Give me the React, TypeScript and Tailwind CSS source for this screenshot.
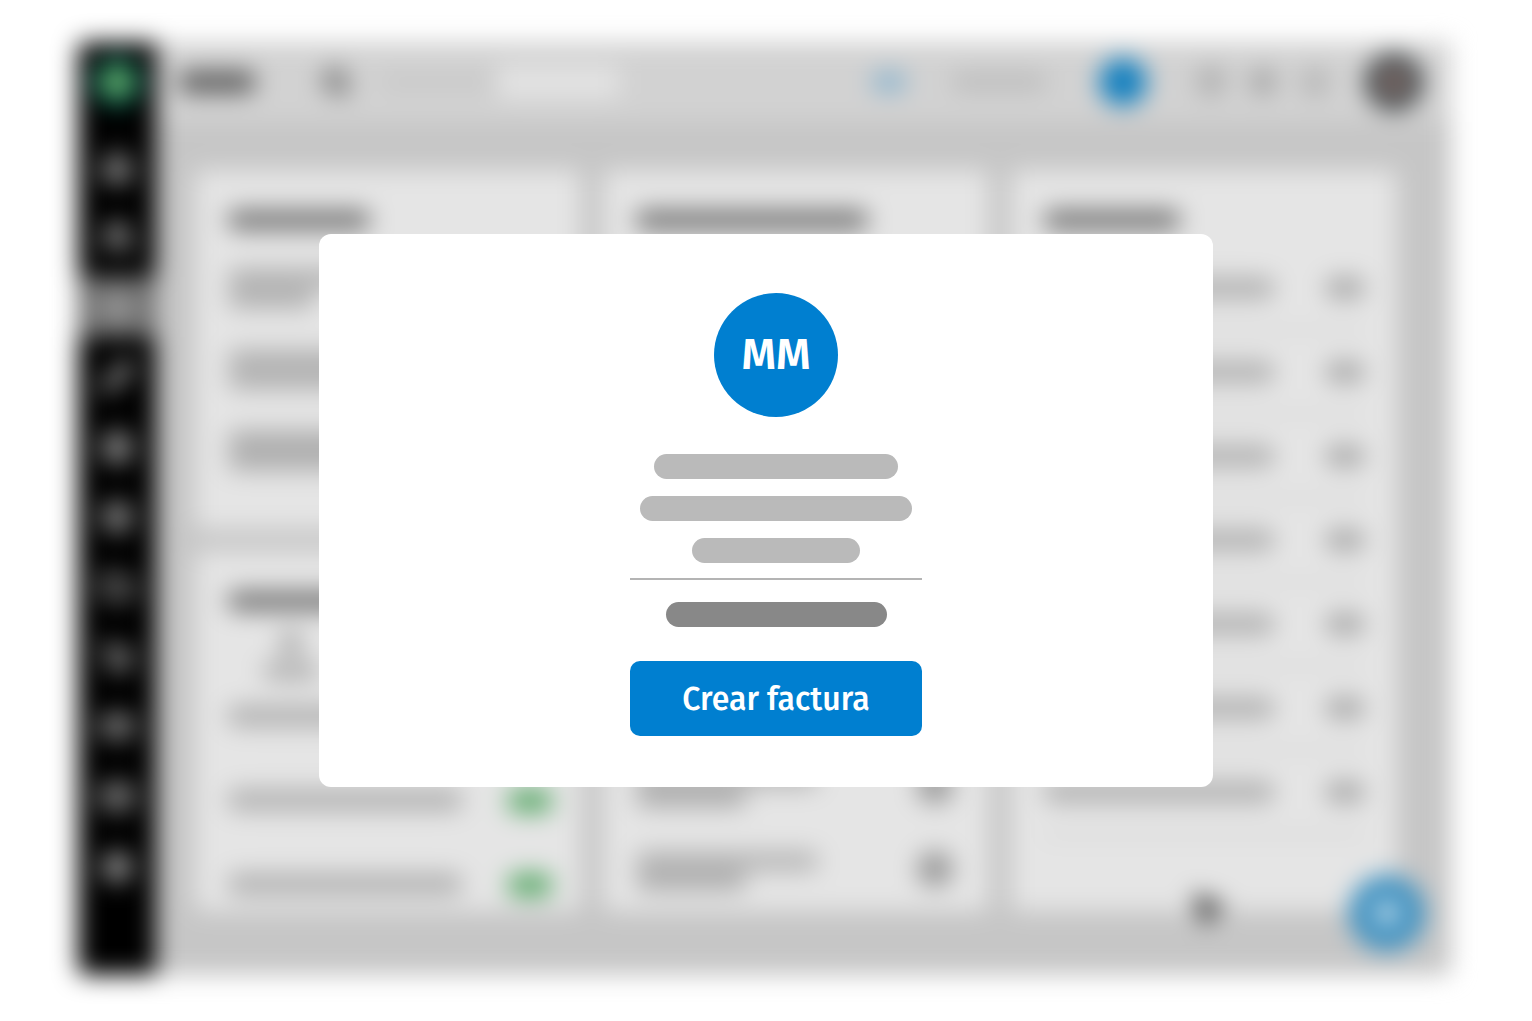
import {
  Bell,
  Box,
  CircleUser,
  CreditCard,
  FileText,
  Folder,
  HelpCircle,
  House,
  LucideIcon,
  Mail,
  MousePointer2,
  Pencil,
  Plus,
  Search,
  Settings,
  ShoppingCart,
  Users,
} from "lucide-react";

interface BarProps {
  className: string;
}

const navItems: { name: string; icon: LucideIcon }[] = [
  { name: "Inicio", icon: House },
  { name: "Contactos", icon: Users },
  { name: "Facturas", icon: FileText },
  { name: "Editar", icon: Pencil },
  { name: "Cuenta", icon: CircleUser },
  { name: "Productos", icon: Box },
  { name: "Archivos", icon: Folder },
  { name: "Compras", icon: ShoppingCart },
  { name: "Pagos", icon: CreditCard },
  { name: "Correo", icon: Mail },
  { name: "Ajustes", icon: Settings },
];

const rows = [1, 2, 3, 4, 5, 6, 7];

function Bar({ className }: BarProps) {
  return <div className={`rounded-full ${className}`} />;
}

function CardTitle({ className }: BarProps) {
  return <Bar className={`h-5 bg-[#757575] ${className}`} />;
}

function Sidebar() {
  return (
    <nav className="w-[78px] shrink-0 rounded-l-lg bg-black">
      <div className="flex h-[90px] justify-center pt-4">
        <div className="flex size-12 items-center justify-center rounded-full bg-[#12705f]">
          <div className="size-6 rounded-full bg-[#84b860]" />
        </div>
      </div>
      {navItems.map(({ name, icon: Icon }) => (
        <div key={name} className="flex h-[70px] items-center">
          <button
            type="button"
            aria-label={name}
            className={
              name === "Facturas"
                ? "flex h-[60px] w-full items-center justify-center bg-[#727272] text-[#a8a8a8]"
                : "flex h-[60px] w-full items-center justify-center text-[#e4e4e4]"
            }
          >
            <Icon size={32} strokeWidth={3} />
          </button>
        </div>
      ))}
    </nav>
  );
}

function Header() {
  return (
    <header className="flex h-[80px] items-center bg-[#d2d2d2] pl-[22px] pr-7">
      <Bar className="h-[22px] w-[78px] bg-[#5d5d5d]" />
      <Search size={28} strokeWidth={5} className="ml-[66px] text-[#555555]" />
      <Bar className="ml-[30px] h-4 w-[116px] bg-[#c8c8c8]" />
      <input
        type="search"
        aria-label="Buscar"
        className="h-8 w-[124px] rounded-lg bg-[#e3e3e3]"
      />
      <Bar className="mr-1 ml-auto h-5 w-9 bg-[#8cb4cd]" />
      <Bar className="ml-10 h-4 w-24 bg-[#bababa]" />
      <div className="ml-[52px] size-12 rounded-full bg-[#1480bf]" />
      <div className="ml-[50px] flex gap-6 text-[#8c8c8c]">
        <HelpCircle size={28} strokeWidth={3} />
        <Settings size={28} strokeWidth={3} />
        <Bell size={28} strokeWidth={3} />
      </div>
      <div className="ml-9 flex size-[58px] items-center justify-center rounded-full bg-[#44484a]">
        <div className="size-5 rounded-full bg-[#b89088]" />
      </div>
    </header>
  );
}

function Dashboard() {
  return (
    <div className="grid flex-1 grid-cols-3 gap-[22px] pt-12 pr-[54px] pb-16 pl-[39px]">
      <div className="flex flex-col gap-[22px]">
        {/* Pending documents */}
        <section className="h-[359px] rounded-lg bg-[#e5e5e5] px-8 pt-10">
          <CardTitle className="w-[144px]" />
          <div className="mt-[38px] flex flex-col gap-10">
            <div>
              <Bar className="h-[21px] w-[180px] bg-[#b4b4b4]" />
              <Bar className="h-[20px] w-[88px] bg-[#b4b4b4]" />
            </div>
            <div>
              <Bar className="h-[21px] w-[240px] bg-[#b4b4b4]" />
              <Bar className="h-[20px] w-[180px] bg-[#b4b4b4]" />
            </div>
            <div>
              <Bar className="h-[21px] w-[240px] bg-[#b0b0b0]" />
              <Bar className="h-[20px] w-[180px] bg-[#b0b0b0]" />
            </div>
          </div>
        </section>
        {/* Tasks with status */}
        <section className="flex-1 rounded-lg bg-[#e5e5e5] px-8 pt-10">
          <CardTitle className="w-[160px]" />
          <div className="mt-5 ml-9 flex w-14 flex-col items-center gap-2">
            <Bar className="size-6 bg-[#a8a8a8]" />
            <Bar className="h-4 w-14 bg-[#a8a8a8]" />
          </div>
          <div className="mt-[26px] flex flex-col">
            {rows.slice(0, 3).map((row) => (
              <div
                key={row}
                className="flex h-[84px] items-start justify-between last:h-6"
              >
                <Bar className="h-[22px] w-[236px] bg-[#b2b2b2]" />
                <Bar className="mr-[-4px] h-6 w-[46px] bg-[#5fab6d]" />
              </div>
            ))}
          </div>
        </section>
      </div>
      {/* Recent activity */}
      <section className="flex flex-col rounded-lg bg-[#e5e5e5] px-8 pt-10">
        <CardTitle className="w-[234px]" />
        <div className="mt-auto pb-5">
          {rows.map((row) => (
            <div key={row} className="flex h-[83px] items-end justify-between">
              <div>
                <Bar className="h-5 w-[184px] bg-[#b5b5b5]" />
                <Bar className="h-5 w-[112px] bg-[#b0b0b0]" />
              </div>
              <Bar className="mr-1 mb-1 size-9 bg-[#9a9a9a]" />
            </div>
          ))}
        </div>
      </section>
      {/* Totals */}
      <section className="rounded-lg bg-[#e5e5e5] px-8 pt-10">
        <CardTitle className="w-[138px]" />
        <div className="mt-[17px]">
          {rows.map((row) => (
            <div
              key={row}
              className="flex h-[84px] items-center justify-between border-b-2 border-[#b8b8b8]"
            >
              <Bar className="h-[22px] w-[232px] bg-[#b2b2b2]" />
              <Bar className="h-[22px] w-10 bg-[#aaaaaa]" />
            </div>
          ))}
        </div>
      </section>
    </div>
  );
}

function InvoiceModal() {
  return (
    <div
      role="dialog"
      aria-modal="true"
      aria-label="Crear factura"
      className="relative flex w-[894px] max-w-full flex-col items-center rounded-xl bg-white pt-[59px] pb-[51px] pl-5"
    >
      <div className="flex size-[124px] items-center justify-center rounded-full bg-[#007fd0] text-[44px] leading-[44px] font-semibold text-white">
        MM
      </div>
      <div className="mt-[37px] flex flex-col items-center gap-[17px]">
        <Bar className="h-[25px] w-[244px] bg-[#bababa]" />
        <Bar className="h-[25px] w-[272px] bg-[#bababa]" />
        <Bar className="h-[25px] w-[168px] bg-[#bababa]" />
      </div>
      <hr className="mt-[15px] w-[292px] border-t-2 border-[#b4b4b4]" />
      <Bar className="mt-[22px] h-[25px] w-[221px] bg-[#888888]" />
      <button
        type="button"
        className="mt-[34px] h-[75px] w-[292px] rounded-[10px] bg-[#007fd0] text-[32px] leading-9 font-medium text-white"
      >
        Crear factura
      </button>
    </div>
  );
}

export default function App() {
  return (
    <main className="grid min-h-screen overflow-hidden bg-white font-['Fira_Sans','Noto_Sans',sans-serif]">
      <div
        inert
        className="relative col-start-1 row-start-1 mt-[42px] mr-[81px] mb-[46px] ml-[78px] flex rounded-lg bg-[#c6c6c6] blur-[12px]"
      >
        <Sidebar />
        <div className="flex min-w-0 flex-1 flex-col">
          <Header />
          <Dashboard />
        </div>
        <MousePointer2
          size={40}
          className="absolute right-[223px] bottom-[46px] fill-[#333333] text-[#333333]"
        />
        <button
          type="button"
          aria-label="Nuevo"
          className="absolute right-[26px] bottom-6 flex size-[76px] items-center justify-center rounded-full bg-[#3d90c0] text-white"
        >
          <Plus size={32} strokeWidth={6} />
        </button>
      </div>
      <div className="col-start-1 row-start-1 flex items-center justify-center">
        <InvoiceModal />
      </div>
    </main>
  );
}
